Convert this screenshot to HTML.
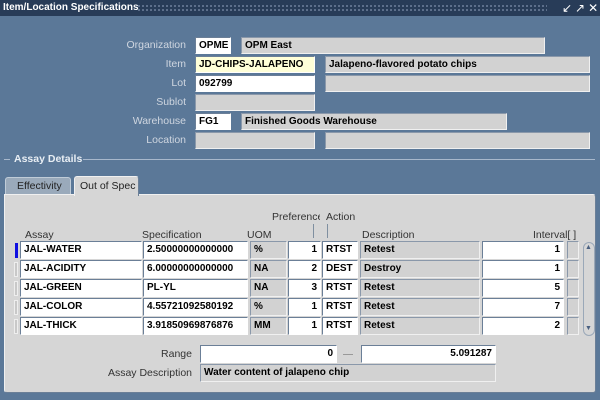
<!DOCTYPE html>
<html><head><style>
*{margin:0;padding:0;box-sizing:border-box}
body{width:600px;height:400px;background:#5b7898;font-family:"Liberation Sans",sans-serif;font-size:10px;position:relative;overflow:hidden}
.a{position:absolute;white-space:nowrap}
.title{left:0;top:0;width:600px;height:16px;background:#283c58;color:#fff;font-weight:bold;font-size:10px;line-height:16px;padding-left:3px}
.dots{left:137px;top:4px;width:410px;height:8px;background-image:radial-gradient(#6a7c98 0.9px,transparent 1.1px);background-size:4px 4px}
.lbl{color:#cfd6e0;text-align:right;width:120px;line-height:16px;font-size:10.5px}
.f{border-top:1px solid #6b7f97;border-left:1px solid #6b7f97;border-right:1px solid #fff;border-bottom:1px solid #fff;background:#fff;font-weight:bold;line-height:15px;padding-left:3px;overflow:hidden;color:#000}
.g{background:#d2d2d2;border-color:#8a98aa #f0f0f0 #f0f0f0 #8a98aa}
.y{background:#ffffd8}
.r{text-align:right;padding-right:3px}
.panel{left:4px;top:194px;width:592px;height:199px;background:#d6d6d6;border:1px solid #f0f0f0;border-right-color:#6b7f97;border-bottom-color:#6b7f97;border-radius:0 3px 3px 3px}
.hd{color:#333;line-height:13px;font-size:10.5px}
</style></head><body>
<div class="a title">Item/Location Specifications</div>
<div class="a dots"></div>
<div class="a" style="left:562px;top:1px;color:#fff;font-size:12px;line-height:14px;letter-spacing:3px">&#8601;&#8599;&#10005;</div>

<div class="a lbl" style="left:66px;top:37px">Organization</div>
<div class="a f" style="left:195px;top:37px;width:36px;height:17px">OPME</div>
<div class="a f g" style="left:241px;top:37px;width:304px;height:17px">OPM East</div>
<div class="a lbl" style="left:66px;top:56px">Item</div>
<div class="a f y" style="left:195px;top:56px;width:120px;height:17px">JD-CHIPS-JALAPENO</div>
<div class="a f g" style="left:325px;top:56px;width:265px;height:17px">Jalapeno-flavored potato chips</div>
<div class="a lbl" style="left:66px;top:75px">Lot</div>
<div class="a f" style="left:195px;top:75px;width:120px;height:17px">092799</div>
<div class="a f g" style="left:325px;top:75px;width:265px;height:17px"></div>
<div class="a lbl" style="left:66px;top:94px">Sublot</div>
<div class="a f g" style="left:195px;top:94px;width:120px;height:17px"></div>
<div class="a lbl" style="left:66px;top:113px">Warehouse</div>
<div class="a f" style="left:195px;top:113px;width:36px;height:17px">FG1</div>
<div class="a f g" style="left:241px;top:113px;width:266px;height:17px">Finished Goods Warehouse</div>
<div class="a lbl" style="left:66px;top:132px">Location</div>
<div class="a f g" style="left:195px;top:132px;width:120px;height:17px"></div>
<div class="a f g" style="left:325px;top:132px;width:265px;height:17px"></div>

<div class="a" style="left:4px;top:159px;width:6px;height:1px;background:#a8b8cc"></div>
<div class="a" style="left:83px;top:159px;width:512px;height:1px;background:#a8b8cc"></div>
<div class="a" style="left:14px;top:153px;color:#e8eef4;font-weight:bold;line-height:13px;font-size:10.5px">Assay Details</div>

<div class="a" style="left:5px;top:177px;width:66px;height:18px;background:#9aaabb;border:1px solid #c0ccd8;border-bottom:none;border-radius:3px 3px 0 0;line-height:16px;padding-left:11px;color:#222;font-size:10.5px">Effectivity</div>
<div class="panel a"></div>
<div class="a" style="left:74px;top:176px;width:65px;height:20px;background:#d6d6d6;border:1px solid #f0f0f0;border-bottom:none;border-right-color:#6b7f97;border-radius:3px 3px 0 0;line-height:18px;padding-left:5px;color:#222;font-size:10.5px">Out of Spec</div>

<div class="a hd" style="left:272px;top:211px">Preference</div>
<div class="a" style="left:320px;top:209px;width:5px;height:17px;background:#d6d6d6"></div>
<div class="a hd" style="left:326px;top:211px">Action</div>
<div class="a" style="left:313px;top:224px;width:1px;height:14px;background:#7f8fa0"></div>
<div class="a" style="left:327px;top:224px;width:1px;height:14px;background:#7f8fa0"></div>
<div class="a hd" style="left:25px;top:229px">Assay</div>
<div class="a hd" style="left:142px;top:229px">Specification</div>
<div class="a hd" style="left:247px;top:229px">UOM</div>
<div class="a hd" style="left:362px;top:229px">Description</div>
<div class="a hd" style="left:533px;top:229px">Interval[ ]</div>

<div class="a" style="left:15px;top:243px;width:3px;height:15px;background:#1010e0"></div>
<div class="a" style="left:14px;top:262px;width:4px;height:15px;background:#c8c8c8;border:1px solid #eee"></div>
<div class="a" style="left:14px;top:281px;width:4px;height:15px;background:#c8c8c8;border:1px solid #eee"></div>
<div class="a" style="left:14px;top:300px;width:4px;height:15px;background:#c8c8c8;border:1px solid #eee"></div>
<div class="a" style="left:14px;top:319px;width:4px;height:15px;background:#c8c8c8;border:1px solid #eee"></div>

<div class="a f" style="left:20px;top:241px;width:122px;height:18px">JAL-WATER</div>
<div class="a f" style="left:143px;top:241px;width:105px;height:18px">2.50000000000000</div>
<div class="a f g" style="left:250px;top:241px;width:37px;height:18px">%</div>
<div class="a f r" style="left:288px;top:241px;width:33px;height:18px">1</div>
<div class="a f" style="left:322px;top:241px;width:36px;height:18px">RTST</div>
<div class="a f g" style="left:360px;top:241px;width:120px;height:18px">Retest</div>
<div class="a f r" style="left:482px;top:241px;width:82px;height:18px">1</div>
<div class="a f g" style="left:567px;top:241px;width:12px;height:18px"></div>

<div class="a f" style="left:20px;top:260px;width:122px;height:18px">JAL-ACIDITY</div>
<div class="a f" style="left:143px;top:260px;width:105px;height:18px">6.00000000000000</div>
<div class="a f g" style="left:250px;top:260px;width:37px;height:18px">NA</div>
<div class="a f r" style="left:288px;top:260px;width:33px;height:18px">2</div>
<div class="a f" style="left:322px;top:260px;width:36px;height:18px">DEST</div>
<div class="a f g" style="left:360px;top:260px;width:120px;height:18px">Destroy</div>
<div class="a f r" style="left:482px;top:260px;width:82px;height:18px">1</div>
<div class="a f g" style="left:567px;top:260px;width:12px;height:18px"></div>

<div class="a f" style="left:20px;top:279px;width:122px;height:18px">JAL-GREEN</div>
<div class="a f" style="left:143px;top:279px;width:105px;height:18px">PL-YL</div>
<div class="a f g" style="left:250px;top:279px;width:37px;height:18px">NA</div>
<div class="a f r" style="left:288px;top:279px;width:33px;height:18px">3</div>
<div class="a f" style="left:322px;top:279px;width:36px;height:18px">RTST</div>
<div class="a f g" style="left:360px;top:279px;width:120px;height:18px">Retest</div>
<div class="a f r" style="left:482px;top:279px;width:82px;height:18px">5</div>
<div class="a f g" style="left:567px;top:279px;width:12px;height:18px"></div>

<div class="a f" style="left:20px;top:298px;width:122px;height:18px">JAL-COLOR</div>
<div class="a f" style="left:143px;top:298px;width:105px;height:18px">4.55721092580192</div>
<div class="a f g" style="left:250px;top:298px;width:37px;height:18px">%</div>
<div class="a f r" style="left:288px;top:298px;width:33px;height:18px">1</div>
<div class="a f" style="left:322px;top:298px;width:36px;height:18px">RTST</div>
<div class="a f g" style="left:360px;top:298px;width:120px;height:18px">Retest</div>
<div class="a f r" style="left:482px;top:298px;width:82px;height:18px">7</div>
<div class="a f g" style="left:567px;top:298px;width:12px;height:18px"></div>

<div class="a f" style="left:20px;top:317px;width:122px;height:18px">JAL-THICK</div>
<div class="a f" style="left:143px;top:317px;width:105px;height:18px">3.91850969876876</div>
<div class="a f g" style="left:250px;top:317px;width:37px;height:18px">MM</div>
<div class="a f r" style="left:288px;top:317px;width:33px;height:18px">1</div>
<div class="a f" style="left:322px;top:317px;width:36px;height:18px">RTST</div>
<div class="a f g" style="left:360px;top:317px;width:120px;height:18px">Retest</div>
<div class="a f r" style="left:482px;top:317px;width:82px;height:18px">2</div>
<div class="a f g" style="left:567px;top:317px;width:12px;height:18px"></div>

<div class="a" style="left:583px;top:242px;width:12px;height:94px;border:1px solid #9aa8b8;border-radius:6px;background:#d6d6d6"></div>
<div class="a" style="left:585px;top:244px;color:#4a6080;font-size:7px;line-height:8px">&#9650;</div>
<div class="a" style="left:585px;top:325px;color:#4a6080;font-size:7px;line-height:8px">&#9660;</div>

<div class="a hd" style="left:100px;top:348px;width:92px;text-align:right">Range</div>
<div class="a f r" style="left:200px;top:345px;width:137px;height:18px">0</div>
<div class="a" style="left:343px;top:354px;width:10px;height:1px;background:#999"></div>
<div class="a f r" style="left:361px;top:345px;width:135px;height:18px">5.091287</div>
<div class="a hd" style="left:80px;top:367px;width:112px;text-align:right">Assay Description</div>
<div class="a f g" style="left:200px;top:364px;width:296px;height:18px">Water content of jalapeno chip</div>
</body></html>
